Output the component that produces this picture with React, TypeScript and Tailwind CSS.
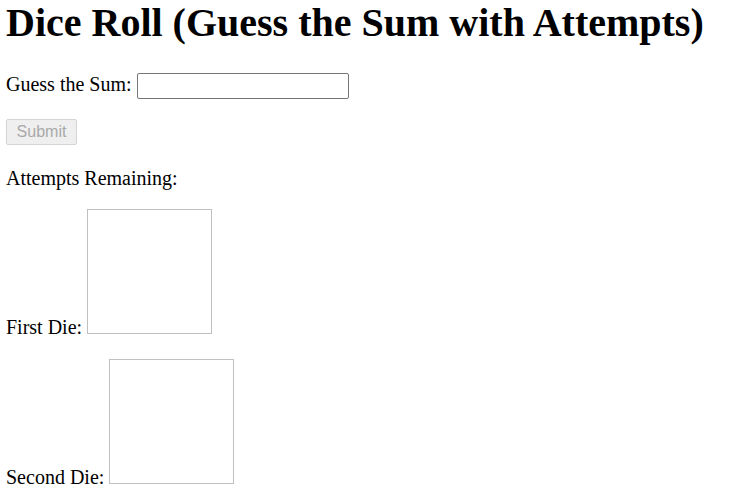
import { useState } from "react";

function DieRow({ label, first }: { label: string; first?: boolean }) {
  return (
    <div className={`${first ? "mt-[19px]" : "mt-5"} text-[20px] leading-[23px]`}>
      {label}{" "}
      <span className="inline-block w-[125px] h-[125px] border border-[#c0c0c0] align-baseline" />
    </div>
  );
}

export default function App() {
  const [guess, setGuess] = useState("");

  return (
    <div className="min-h-screen bg-white text-black px-[6px] font-['Liberation_Serif',serif]">
      <h1 className="m-0 text-[40px] font-bold leading-[46px]">
        Dice Roll (Guess the Sum with Attempts)
      </h1>
      <div className="mt-[27px] flex items-start text-[20px] leading-[23px]">
        <span>Guess the Sum:&nbsp;</span>
        <input
          type="text"
          value={guess}
          onChange={(e) => setGuess(e.target.value)}
          className="w-[212px] h-[26px] border border-[#767676] rounded-[2px] px-1 text-[20px] outline-none"
        />
      </div>
      <button
        disabled
        className="mt-5 block w-[71px] h-[26px] bg-[#efefef] border border-[#d4d4d4] rounded-[2px] text-[16px] text-[#a9a9a9] font-['Liberation_Sans',Arial,sans-serif]"
      >
        Submit
      </button>
      <div className="mt-[22px] text-[20px] leading-[23px]">Attempts Remaining:</div>
      <DieRow label="First Die:" first />
      <DieRow label="Second Die:" />
    </div>
  );
}
